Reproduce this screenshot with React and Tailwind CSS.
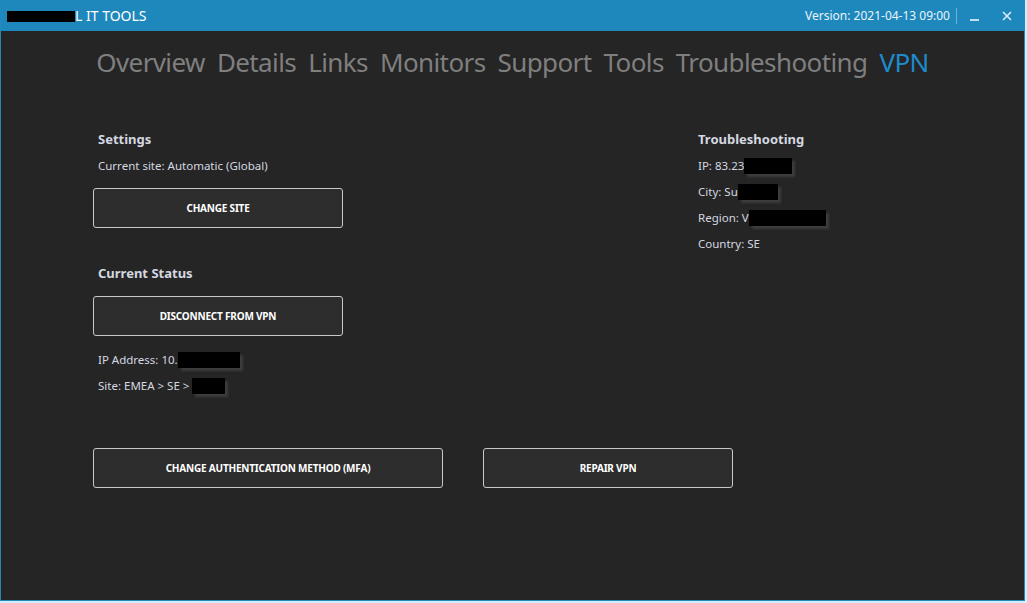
import React from 'react';

const tabs = ['Overview', 'Details', 'Links', 'Monitors', 'Support', 'Tools', 'Troubleshooting', 'VPN'];

function Blackout({ w }) {
  return <span className={`inline-block h-[16px] bg-black shadow-[3px_3px_2px_#3d3d3d] align-middle ${w}`} />;
}

function Btn({ children, w = 'w-[250px]' }) {
  return (
    <button className={`${w} shrink-0 h-[40px] rounded-[3px] border border-[#c9c9c9] bg-[#2d2d2d] text-[10px] font-bold uppercase text-white tracking-[-0.2px]`}>
      {children}
    </button>
  );
}

export default function App() {
  return (
    <div className="w-[1027px] h-[603px] bg-[#d6ecf7] font-['Noto_Sans',sans-serif] overflow-hidden">
      <div className="w-[1025px] h-[601px] border border-[#1e8ac0] bg-[#252525] flex flex-col">
        <div className="h-[30px] bg-[#1e88bd] flex items-center pl-[6px] pr-[12px] text-white">
          <span className="inline-block w-[68px] h-[11px] bg-black" />
          <span className="text-[14px] leading-none">L IT TOOLS</span>
          <div className="ml-auto flex items-center">
            <span className="text-[12px] text-[#e8f3fa]">Version: 2021-04-13 09:00</span>
            <span className="w-px h-[16px] bg-[#6ab5dc] ml-[6px]" />
            <span className="w-[9px] h-[2px] bg-[#bfe0f1] ml-[13px] mt-[8px]" />
            <svg className="ml-[23px]" width="10" height="10" viewBox="0 0 10 10">
              <path d="M1 1L9 9M9 1L1 9" stroke="#d9edf7" strokeWidth="1.6" />
            </svg>
          </div>
        </div>

        <nav className="flex justify-center gap-[12px] pt-[13px] text-[26px] leading-[36px] text-[#7f7f7f] tracking-[-0.6px]">
          {tabs.map((t) => (
            <span key={t} className={t === 'VPN' ? 'text-[#1e8bcc]' : ''}>{t}</span>
          ))}
        </nav>

        <div className="flex pl-[92px] pt-[50px] text-[11.5px] text-[#d4d8e0]">
          <div className="w-[605px] flex flex-col">
            <div className="pl-[5px] text-[13px] font-bold leading-[18px]">Settings</div>
            <div className="pl-[5px] mt-[10px] leading-[16px]">Current site: Automatic (Global)</div>
            <div className="mt-[14px] flex"><Btn>Change site</Btn></div>
            <div className="pl-[5px] mt-[36px] text-[13px] font-bold leading-[18px]">Current Status</div>
            <div className="mt-[14px] flex"><Btn>Disconnect from VPN</Btn></div>
            <div className="pl-[5px] mt-[16px] leading-[16px] flex items-center">
              IP Address: 10.<Blackout w="w-[62px]" />
            </div>
            <div className="pl-[5px] mt-[10px] leading-[16px] flex items-center">
              Site: EMEA &gt; SE &gt;&nbsp;<Blackout w="w-[33px]" />
            </div>
            <div className="mt-[54px] flex gap-[40px]">
              <Btn w="w-[350px]">Change authentication method (MFA)</Btn>
              <Btn>Repair VPN</Btn>
            </div>
          </div>
          <div className="flex flex-col">
            <div className="text-[13px] font-bold leading-[18px]">Troubleshooting</div>
            <div className="mt-[10px] leading-[16px] flex items-center">IP: 83.23<Blackout w="w-[48px]" /></div>
            <div className="mt-[10px] leading-[16px] flex items-center">City: Su<Blackout w="w-[40px]" /></div>
            <div className="mt-[10px] leading-[16px] flex items-center">Region: V<Blackout w="w-[77px]" /></div>
            <div className="mt-[10px] leading-[16px]">Country: SE</div>
          </div>
        </div>
      </div>
    </div>
  );
}
